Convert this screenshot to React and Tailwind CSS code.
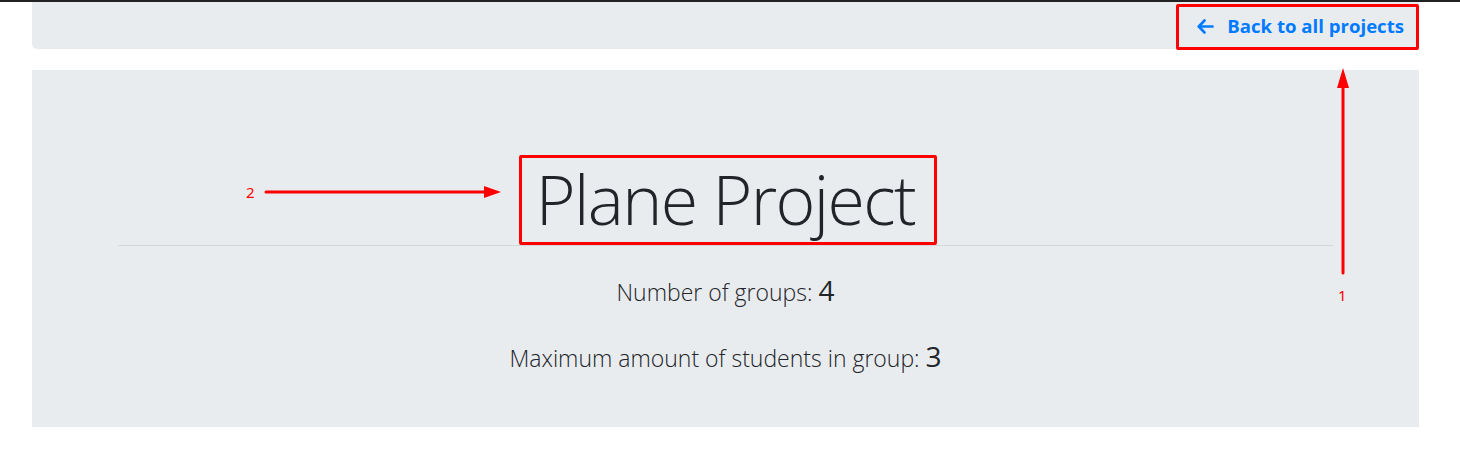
import React from "react";

export default function App() {
  return (
    <div className="relative w-[1460px] h-[469px] bg-white overflow-hidden" style={{ fontFamily: '"Open Sans", "Noto Sans", sans-serif' }}>
      <div className="h-[2px] bg-[#222]" />
      <div className="pl-8 pr-[41px]">
        <nav className="h-[47px] bg-[#e9ecef] rounded-b-[5px] flex items-center justify-end pr-[15px]">
          <a className="flex items-center gap-[13px] text-[#007bff] font-bold text-[18.6px] leading-none pt-[1px]">
            <svg width="17" height="15" viewBox="0 0 17 15" fill="none" stroke="#007bff" strokeWidth="2.6" strokeLinecap="round" strokeLinejoin="round">
              <path d="M15.5 7.5H2" />
              <path d="M7.5 1.5L1.8 7.5L7.5 13.5" />
            </svg>
            <span>Back to all projects</span>
          </a>
        </nav>
        <section className="mt-[21px] h-[357px] bg-[#e9ecef] flex flex-col items-center text-[#212529]">
          <h1 className="mt-[84px] text-[68px] font-light leading-[90px] tracking-[-1.6px]">Plane Project</h1>
          <hr className="w-[1215px] border-t border-[#d5d8db] mt-[1px]" />
          <p className="mt-[27px] text-[23px] font-light leading-[34px]">
            Number of groups: <span className="text-[28px] font-normal">4</span>
          </p>
          <p className="mt-[30px] text-[23px] font-light leading-[34px]">
            Maximum amount of students in group: <span className="text-[28px] font-normal">3</span>
          </p>
        </section>
      </div>

      {/* annotations */}
      <div className="absolute left-[1176px] top-[4px] w-[243px] h-[46px] border-[3px] border-[#ff0000] rounded-[2px]" />
      <div className="absolute left-[519px] top-[155px] w-[418px] h-[90px] border-[3px] border-[#ff0000] rounded-[2px]" />
      <span className="absolute left-[246px] top-[182px] text-[15px] leading-[20px] text-[#ff0000]" style={{ fontFamily: '"Noto Sans", sans-serif' }}>2</span>
      <span className="absolute left-[1338px] top-[285px] text-[15px] leading-[20px] text-[#ff0000]" style={{ fontFamily: '"Noto Sans", sans-serif' }}>1</span>
      <svg className="absolute left-0 top-0" width="1460" height="469" style={{ pointerEvents: "none" }}>
        <line x1="266" y1="192" x2="488" y2="192" stroke="#ff0000" strokeWidth="3" strokeLinecap="round" />
        <polygon points="484,186 501,192 484,198" fill="#ff0000" />
        <line x1="1343" y1="273" x2="1343" y2="84" stroke="#ff0000" strokeWidth="3" strokeLinecap="round" />
        <polygon points="1337,88 1343,68 1349,88" fill="#ff0000" />
      </svg>
    </div>
  );
}
